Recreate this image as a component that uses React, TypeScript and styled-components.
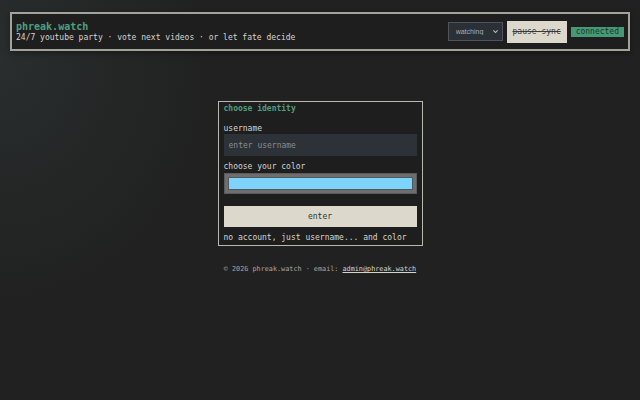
import {FC} from 'react'
import styled, {createGlobalStyle} from 'styled-components'

const MONO = `'DejaVu Sans Mono', 'Liberation Mono', monospace`
const COLOR = {
  BG: '#212121',
  PANEL: '#1e1e1e',
  BORDER: '#a3a39c',
  GREEN: '#4e9e7e',
  TEXT: '#d6d6d0',
  MUTED: '#a8a8a2',
  BEIGE: '#dcd9cc',
}

const GlobalStyle = createGlobalStyle`
  html, body {
    margin: 0;
    height: 100%;
  }
  body {
    background: radial-gradient(ellipse 260px 300px at 0 60px, rgba(70, 90, 90, 0.22), transparent 80%),
      ${COLOR.BG};
    font-family: ${MONO};
    color: ${COLOR.TEXT};
  }
`

const App: FC = () => (
  <>
    <GlobalStyle />
    <Header>
      <Brand>
        <Title>phreak.watch</Title>
        <Tagline>24/7 youtube party · vote next videos · or let fate decide</Tagline>
      </Brand>
      <Controls>
        <SelectWrap>
          <Select defaultValue="watching">
            <option value="watching">watching</option>
            <option value="away">away</option>
          </Select>
          <Chevron width="7" height="7" viewBox="0 0 10 10">
            <path d="M2 3.5 L5 6.5 L8 3.5" fill="none" stroke="#b8bcc0" strokeWidth="1.6" />
          </Chevron>
        </SelectWrap>
        <SyncButton>pause sync</SyncButton>
        <Status>connected</Status>
      </Controls>
    </Header>

    <Main>
      <Card>
        <CardTitle>choose identity</CardTitle>
        <Label htmlFor="username">username</Label>
        <TextInput id="username" placeholder="enter username" />
        <Label htmlFor="color" $gap={6}>choose your color</Label>
        <ColorInput id="color" type="color" defaultValue="#7dd3fc" />
        <EnterButton>enter</EnterButton>
        <Note>no account, just username... and color</Note>
      </Card>
      <Footer>
        © 2026 phreak.watch · email: <MailLink href="#">admin@phreak.watch</MailLink>
      </Footer>
    </Main>
  </>
)

const Header = styled.header`
  display: flex;
  align-items: center;
  justify-content: space-between;
  margin: 12px 10px 0;
  height: 35px;
  padding: 0 4px 0 4px;
  border: 2px solid ${COLOR.BORDER};
  background: ${COLOR.PANEL};
  box-shadow: 0 2px 6px rgba(0, 0, 0, 0.35);
`
const Brand = styled.div`
  display: flex;
  flex-direction: column;
  padding-top: 1px;
`
const Title = styled.h1`
  margin: 0;
  font-size: 10px;
  line-height: 12px;
  font-weight: bold;
  color: ${COLOR.GREEN};
`
const Tagline = styled.p`
  margin: 0;
  font-size: 8px;
  line-height: 10px;
  color: ${COLOR.TEXT};
`
const Controls = styled.div`
  display: flex;
  align-items: center;
  gap: 4px;
`
const SelectWrap = styled.div`
  position: relative;
  display: flex;
`
const Select = styled.select`
  appearance: none;
  width: 55px;
  height: 19px;
  padding: 0 0 0 7px;
  border: 1px solid #4d545b;
  border-radius: 0;
  background: #2a3036;
  color: #a9adb1;
  font-family: 'Liberation Sans', Arial, sans-serif;
  font-size: 7px;
  outline: none;
`
const Chevron = styled.svg`
  position: absolute;
  right: 4px;
  top: 6px;
  pointer-events: none;
`
const SyncButton = styled.button`
  width: 60px;
  height: 22px;
  padding: 0;
  border: none;
  background: ${COLOR.BEIGE};
  color: #3a3a38;
  font-family: ${MONO};
  font-size: 8px;
  text-decoration: line-through;
`
const Status = styled.span`
  display: inline-block;
  padding: 0 5px;
  height: 10px;
  line-height: 10px;
  background: #469876;
  color: #173a2c;
  font-size: 8px;
`
const Main = styled.main`
  display: flex;
  flex-direction: column;
  align-items: center;
  padding-top: 50px;
`
const Card = styled.section`
  display: flex;
  flex-direction: column;
  width: 193px;
  padding: 2px 5px 2px;
  border: 1px solid #b9b9b4;
  background: ${COLOR.PANEL};
`
const CardTitle = styled.h2`
  margin: 0;
  font-size: 8px;
  line-height: 10px;
  font-weight: bold;
  color: ${COLOR.GREEN};
`
const Label = styled.label<{$gap?: number}>`
  margin-top: ${p => p.$gap ?? 10}px;
  font-size: 8px;
  line-height: 10px;
  color: ${COLOR.TEXT};
`
const TextInput = styled.input`
  height: 22px;
  box-sizing: border-box;
  padding: 0 5px;
  border: none;
  background: #2c3238;
  color: ${COLOR.TEXT};
  font-family: ${MONO};
  font-size: 8px;
  outline: none;

  &::placeholder {
    color: #878c90;
  }
`
const ColorInput = styled.input`
  -webkit-appearance: none;
  appearance: none;
  width: 100%;
  height: 21px;
  margin: 1px 0 0;
  box-sizing: border-box;
  padding: 3px;
  border: 1px solid #5a5a5a;
  background: #6e6e6c;
  cursor: pointer;

  &::-webkit-color-swatch-wrapper {
    padding: 0;
  }
  &::-webkit-color-swatch {
    border: 1px solid #4d5a62;
  }
`
const EnterButton = styled.button`
  height: 21px;
  margin-top: 12px;
  padding: 0;
  border: none;
  background: ${COLOR.BEIGE};
  color: #333330;
  font-family: ${MONO};
  font-size: 8px;
`
const Note = styled.p`
  margin: 6px 0 0;
  font-size: 8px;
  line-height: 10px;
  color: ${COLOR.TEXT};
`
const Footer = styled.footer`
  margin-top: 19px;
  font-size: 6.8px;
  line-height: 9px;
  color: ${COLOR.MUTED};
`
const MailLink = styled.a`
  color: ${COLOR.TEXT};
  text-decoration: underline;
`

export default App
